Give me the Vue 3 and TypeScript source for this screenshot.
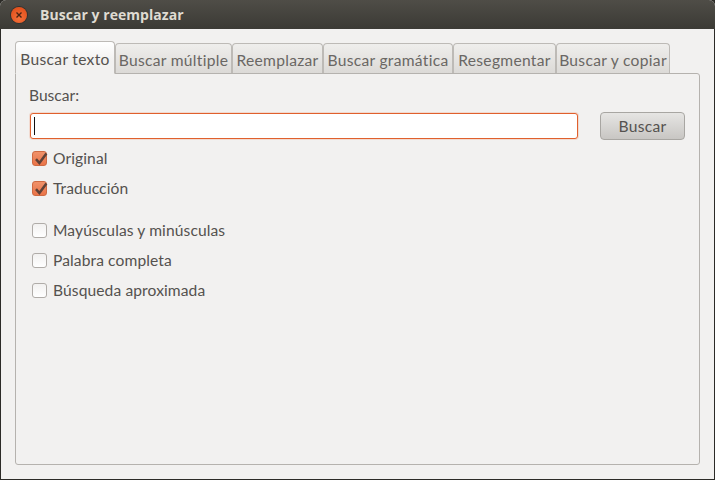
<script setup lang="ts">
const tabs = [
  { label: 'Buscar texto', width: 100 },
  { label: 'Buscar múltiple', width: 117 },
  { label: 'Reemplazar', width: 91 },
  { label: 'Buscar gramática', width: 130 },
  { label: 'Resegmentar', width: 103 },
  { label: 'Buscar y copiar', width: 114 },
]

const scopes = ['Original', 'Traducción']
const options = ['Mayúsculas y minúsculas', 'Palabra completa', 'Búsqueda aproximada']
</script>

<template>
  <div class="window">
    <header class="titlebar">
      <span class="close">
        <svg width="8" height="8" viewBox="0 0 8 8">
          <path d="M1.5 1.5 6.5 6.5M6.5 1.5 1.5 6.5" stroke="#4a2413" stroke-width="1.4" fill="none" />
        </svg>
      </span>
      <span class="title">Buscar y reemplazar</span>
    </header>

    <main class="content">
      <nav class="tabs">
        <div
          v-for="(tab, i) in tabs"
          :key="tab.label"
          class="tab"
          :class="{ active: i === 0 }"
          :style="{ width: tab.width + 'px' }"
        >
          {{ tab.label }}
        </div>
      </nav>

      <section class="panel">
        <div class="label">Buscar:</div>
        <div class="search-row">
          <div class="input"><span class="caret"></span></div>
          <button class="btn">Buscar</button>
        </div>

        <label v-for="s in scopes" :key="s" class="check-row">
          <span class="box checked">
            <svg width="17" height="17" viewBox="0 0 17 17">
              <path d="M4 8.2 7.4 12 14.4 2.6" stroke="#5f4238" stroke-width="2.5" fill="none" />
            </svg>
          </span>
          {{ s }}
        </label>

        <div class="spacer"></div>

        <label v-for="o in options" :key="o" class="check-row">
          <span class="box"></span>
          {{ o }}
        </label>
      </section>
    </main>
  </div>
</template>

<style>
html,
body {
  margin: 0;
  background: #2c2b27;
}
</style>

<style scoped>
.window {
  display: flex;
  flex-direction: column;
  box-sizing: border-box;
  width: 715px;
  height: 480px;
  overflow: hidden;
  border-radius: 6px 6px 0 0;
  background: #f2f1f0;
  font-family: Lato, "Noto Sans", sans-serif;
  font-size: 15.6px;
  color: #55524f;
}

.titlebar {
  display: flex;
  flex: none;
  align-items: center;
  gap: 13px;
  height: 29px;
  padding-left: 11px;
  background: linear-gradient(#4f4d47, #3b3a35);
}

.close {
  display: flex;
  align-items: center;
  justify-content: center;
  width: 16px;
  height: 16px;
  border-radius: 50%;
  background: radial-gradient(circle at 50% 70%, #f4703a, #dd4814);
  box-shadow: 0 0 0 1px #33322e;
}

.title {
  font-family: "Open Sans", sans-serif;
  font-size: 14px;
  font-weight: 700;
  letter-spacing: 0.05px;
  color: #dfdbd2;
}

.content {
  display: flex;
  flex: 1;
  flex-direction: column;
  box-sizing: border-box;
  padding: 12px 14px 14px;
  border: solid #2c2b27;
  border-width: 0 1px 1px;
}

.tabs {
  display: flex;
  flex: none;
  align-items: flex-end;
  height: 33px;
  margin-bottom: -1px;
}

.tab {
  box-sizing: border-box;
  flex: none;
  height: 31px;
  border: 1px solid #bdbab6;
  border-bottom-color: #b5b2ae;
  border-radius: 4px 4px 0 0;
  background: linear-gradient(#efeeec, #dcdad7);
  letter-spacing: 0.3px;
  line-height: 33px;
  text-align: center;
  white-space: nowrap;
  color: #6a6764;
}

.tab.active {
  position: relative;
  z-index: 1;
  height: 33px;
  border-bottom-color: #f2f1f0;
  background: linear-gradient(#fff, #f2f1f0 60%);
  line-height: 35px;
  color: #55524f;
}

.panel {
  display: flex;
  flex: 1;
  flex-direction: column;
  padding: 8px 14px 0 13px;
  border: 1px solid #b5b2ae;
  border-radius: 0 3px 3px 3px;
}

.label {
  height: 30px;
  line-height: 27px;
}

.search-row {
  display: flex;
  flex: none;
  align-items: center;
  gap: 22px;
  height: 28px;
  margin-bottom: 3px;
}

.input {
  display: flex;
  flex: none;
  align-items: center;
  box-sizing: border-box;
  width: 548px;
  height: 26px;
  margin-left: 1px;
  padding-left: 3px;
  border: 1px solid #e0602d;
  border-radius: 3px;
  background: #fff;
  box-shadow: 0 0 0 1px rgba(240, 150, 110, 0.25);
}

.caret {
  width: 1px;
  height: 18px;
  background: #111;
}

.btn {
  box-sizing: border-box;
  width: 85px;
  height: 28px;
  padding: 0;
  border: 1px solid #a8a6a2;
  border-radius: 4px;
  background: linear-gradient(#e6e5e3, #c8c6c3);
  font: inherit;
  letter-spacing: 0.3px;
  color: #55524f;
}

.check-row {
  display: flex;
  flex: none;
  align-items: center;
  gap: 6px;
  height: 30px;
  padding-left: 2px;
  letter-spacing: 0.1px;
}

.spacer {
  flex: none;
  height: 12px;
}

.box {
  display: block;
  flex: none;
  box-sizing: border-box;
  width: 15px;
  height: 15px;
  margin-left: 1px;
  border: 1px solid #b0aca8;
  border-radius: 3px;
  background: linear-gradient(#f2f1f0, #fff);
}

.box.checked {
  border-color: #cf6a42;
  background: linear-gradient(#f0926a, #ea7448);
}

.box.checked svg {
  display: block;
  margin: -1px;
}
</style>
